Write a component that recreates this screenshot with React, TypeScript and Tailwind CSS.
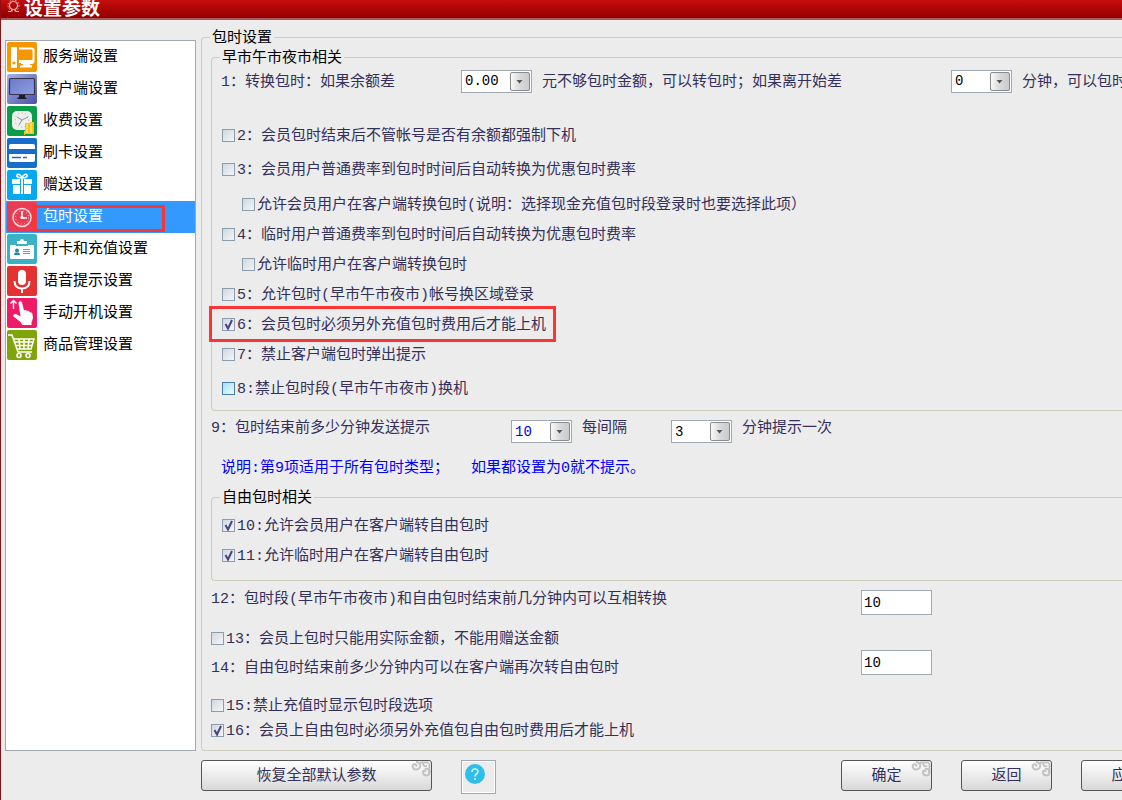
import { useState } from "react";
import type { ReactNode } from "react";

const ICONS: Record<string, ReactNode> = {
  server: (
    <>
      <rect width="30" height="30" rx="2" fill="#f39800" />
      <rect x="4" y="5" width="6" height="21" rx=".5" fill="#fff" />
      <circle cx="7" cy="21" r="1.600" fill="#f39800" />
      <path d="M12 6.500h12.500a2 2 0 0 1 2 2V19a2 2 0 0 1-2 2H14" fill="none" stroke="#fff" strokeWidth="2" />
      <path d="M16 21h7v2h2v2.500H13V24l3-1zM12 18h14v3H12z" fill="#fff" />
    </>
  ),
  client: (
    <>
      <defs>
        <linearGradient id="clientBg" x1="0" y1="0" x2="1" y2="1">
          <stop offset="0" stopColor="#a9b3e4" />
          <stop offset="1" stopColor="#4a50a8" />
        </linearGradient>
        <linearGradient id="clientScreen" x1="0" y1="0" x2="1" y2="1">
          <stop offset="0" stopColor="#6a7ac8" />
          <stop offset="1" stopColor="#8f9fe0" />
        </linearGradient>
      </defs>
      <rect width="30" height="30" rx="2" fill="url(#clientBg)" />
      <rect x="2.500" y="4.500" width="25" height="16" rx="1" fill="url(#clientScreen)" stroke="#33344a" strokeWidth="1.200" />
      <path d="M12 21h6v2.500h1.500V25h-9v-1.500H12z" fill="#1b1b26" />
    </>
  ),
  fee: (
    <>
      <rect width="30" height="30" rx="2" fill="#0a9c48" />
      <rect x="5" y="5" width="20" height="19" rx="5" fill="#eef0ee" />
      <circle cx="15" cy="14" r="7" fill="none" stroke="#aaa" strokeDasharray="1 2.600" />
      <path d="M10 11l5 3 6-3M15 14l-3 5" fill="none" stroke="#777" strokeWidth=".8" />
      <path d="M18 17h5v-1h4v12h-9v1h-1v-4h1z" fill="#f6c51c" />
      <path d="M20 18v9M24 17v10" stroke="#fbe27a" strokeWidth="1.500" />
    </>
  ),
  card: (
    <>
      <rect width="30" height="30" rx="2" fill="#186dcb" />
      <path d="M4 6h22a2 2 0 0 1 2 2v3H2V8a2 2 0 0 1 2-2zM2 16h26v6a2 2 0 0 1-2 2H4a2 2 0 0 1-2-2z" fill="#fff" />
      <path d="M5 19.500h9M16 19.500h4" stroke="#186dcb" strokeWidth="1.500" />
    </>
  ),
  gift: (
    <>
      <rect width="30" height="30" rx="2" fill="#06a9ef" />
      <path d="M5 9h8v5H5zM17 9h8v5h-8zM6 15h7v9H6zM17 15h7v9h-7zM14 9h2v15h-2z" fill="#fff" />
      <path d="M15 8c-1-3-4-5-5-3s2 3 5 3c3 0 6-1 5-3s-4 0-5 3z" fill="none" stroke="#fff" strokeWidth="1.500" />
    </>
  ),
  clock: (
    <>
      <rect width="30" height="30" rx="2" fill="#e73c53" />
      <circle cx="15" cy="15.500" r="9" fill="none" stroke="#fbd5da" strokeWidth="1.500" />
      <circle cx="15" cy="15.500" r="6.500" fill="none" stroke="#fbd5da" strokeDasharray="1 2.400" />
      <path d="M15 9v7h5" fill="none" stroke="#fff" strokeWidth="1.600" />
      <circle cx="15" cy="15.500" r="1.600" fill="#fff" />
    </>
  ),
  badge: (
    <>
      <rect width="30" height="30" rx="2" fill="#3bb1c5" />
      <path d="M4 11h22a1 1 0 0 1 1 1v12a1 1 0 0 1-1 1H4a1 1 0 0 1-1-1V12a1 1 0 0 1 1-1z" fill="#fff" />
      <path d="M10 10V7h3a2 2 0 0 1 4 0h3v3z" fill="#fff" />
      <path d="M9 11h12v1H9zM16 15h7v1h-7zM16 17h7v1h-7zM16 19h7v1h-7z" fill="#3bb1c5" />
      <path d="M7 21c0-2 1-2.500 3-2.500s3 .5 3 2.500z" fill="#2a8a9c" />
      <circle cx="10" cy="16.500" r="2" fill="#2a8a9c" />
    </>
  ),
  mic: (
    <>
      <rect width="30" height="30" rx="2" fill="#e23232" />
      <rect x="11" y="4" width="8" height="15" rx="4" fill="#fff" />
      <path d="M7.500 15c0 5 3 7.500 7.500 7.500s7.500-2.500 7.500-7.500M15 23v4" fill="none" stroke="#fff" strokeWidth="2" />
    </>
  ),
  hand: (
    <>
      <rect width="30" height="30" rx="2" fill="#ef1b66" />
      <path
        d="M11.500 5a1.800 1.800 0 0 1 3.500-.5l2 8c1-.8 2.500-.5 3 .6 1-.6 2.500 0 2.800 1.200 1.500-.3 2.500.5 2.700 2l.5 3.700-1.500 4.500V27h-9l-2-3-7-5.500c-1-1.500.8-3 2.500-2.500l4.500 2.500z"
        fill="#fff"
      />
      <path d="M6.500 11V3M3.500 5.500l3-3 3 3" fill="none" stroke="#fff" strokeWidth="1.400" />
    </>
  ),
  cart: (
    <>
      <rect width="30" height="30" rx="2" fill="#80a40c" />
      <path
        d="M1 5h4l6 17h14M6 9h21l-3 10H10M7.500 12h19M9 15.500h16M12 9l1 10M17 9v10M22 9l-1 10"
        fill="none"
        stroke="#fff"
        strokeWidth="1.500"
      />
      <circle cx="12" cy="25.500" r="2" fill="none" stroke="#fff" strokeWidth="1.600" />
      <circle cx="21" cy="25.500" r="2" fill="none" stroke="#fff" strokeWidth="1.600" />
    </>
  ),
};

const MENU = [
  { icon: "server", label: "服务端设置" },
  { icon: "client", label: "客户端设置" },
  { icon: "fee", label: "收费设置" },
  { icon: "card", label: "刷卡设置" },
  { icon: "gift", label: "赠送设置" },
  { icon: "clock", label: "包时设置" },
  { icon: "badge", label: "开卡和充值设置" },
  { icon: "mic", label: "语音提示设置" },
  { icon: "hand", label: "手动开机设置" },
  { icon: "cart", label: "商品管理设置" },
];

interface CheckProps {
  label: string;
  checked?: boolean;
  hot?: boolean;
  className?: string;
  children?: ReactNode;
}

function Check({ label, checked = false, hot = false, className = "h-[30px]", children }: CheckProps) {
  return (
    <label className={`relative flex w-fit items-center gap-[2px] ${className}`}>
      <span className="grid">
        <input
          type="checkbox"
          defaultChecked={checked}
          className={`peer col-start-1 row-start-1 size-[13px] appearance-none border bg-linear-to-br ${
            hot
              ? "border-[#4a7fa3] from-[#9fe0f8] to-[#effaff]"
              : "border-[#8e9dab] from-[#cfd8e0] to-[#f4f6f8]"
          }`}
        />
        <svg
          viewBox="0 0 13 13"
          className="pointer-events-none invisible col-start-1 row-start-1 size-[13px] peer-checked:visible"
        >
          <path d="M3.500 6l2.500 4.500L10 2" fill="none" stroke="#474583" strokeWidth="2" />
        </svg>
      </span>
      <span className="pt-1">{label}</span>
      {children}
    </label>
  );
}

interface ComboProps {
  name: string;
  value: string;
  options: string[];
  className: string;
}

function Combo({ name, value, options, className }: ComboProps) {
  return (
    <span className={`relative h-[23px] shrink-0 ${className}`}>
      <select
        aria-label={name}
        defaultValue={value}
        className="block h-full w-full appearance-none border border-[#a0a9b2] bg-white pl-[3px] text-sm"
      >
        {options.map((o) => (
          <option key={o}>{o}</option>
        ))}
      </select>
      <svg viewBox="0 0 20 19" className="pointer-events-none absolute top-[2px] right-[2px] h-[19px] w-5">
        <defs>
          <linearGradient id="comboBtn" x1="0" y1="0" x2="1" y2="0">
            <stop offset="0" stopColor="#fafafa" />
            <stop offset=".5" stopColor="#d9d9db" />
            <stop offset="1" stopColor="#c9c9cf" />
          </linearGradient>
        </defs>
        <rect x=".5" y=".5" width="19" height="18" rx="1.500" fill="url(#comboBtn)" stroke="#8b8b8b" />
        <path d="M6.500 8h6l-3 3.500z" fill="#555" />
      </svg>
    </span>
  );
}

function Group({ title, className = "", children }: { title: string; className?: string; children: ReactNode }) {
  return (
    <fieldset className={`min-w-0 rounded-l border border-r-0 border-[#cdcdbd] ${className}`}>
      <legend className="ml-2 px-[2px] pt-1 leading-4 text-black">{title}</legend>
      {children}
    </fieldset>
  );
}

function PushButton({ className, children }: { className: string; children: ReactNode }) {
  return (
    <button
      type="button"
      className={`relative h-[31px] shrink-0 rounded-[3px] border border-[#555] bg-linear-to-b from-white via-[#ececec] to-[#d8d8d8] pt-[2px] ${className}`}
    >
      {children}
      <svg viewBox="0 0 20 16" className="absolute top-0 right-0 h-4 w-5" fill="none" stroke="#c2c2c2" strokeWidth="2">
        <path d="M5 5.500c1-1.500-1-3-2.500-2s-1 4.500 2 5S10 6 9 3.500 6 1 5 1" />
        <path d="M9 1.500h9M12 2c0 3 2 4 4 2.500M18.500 2v10" />
        <path d="M14.500 11c0-2-2.500-2-2.500 0s1.500 3.500 4 3.500 3-3 2-5-3-2-4-1.500" />
      </svg>
    </button>
  );
}

export default function App() {
  const [active, setActive] = useState("包时设置");

  return (
    <div className="flex min-h-screen flex-col overflow-hidden border-l border-[#8a1016] bg-[#ececec] font-['Liberation_Mono','Noto_Sans_CJK_SC',monospace] text-[15px] leading-5 whitespace-nowrap text-[#33305a]">
      <header className="flex h-5 shrink-0 items-start gap-1 border-b-2 border-[#a8585a] bg-linear-to-b from-[#c80d0d] to-[#920000] pl-[6px]">
        <svg viewBox="0 0 13 13" className="size-[13px]" fill="none" stroke="#e8b9b4" strokeWidth="1.200">
          <circle cx="6.500" cy="5.500" r="4" />
          <circle cx="6.500" cy="5.500" r="5.500" strokeDasharray="1.500 1.500" strokeWidth="1" />
          <path d="M1 11.500h3l1-2M12 11.500H9l-1-2" />
        </svg>
        <h1 className="text-[19px] leading-5 font-bold text-white">设置参数</h1>
      </header>

      <div className="flex pt-[7px] pl-1">
        <nav className="mt-[13px] w-[191px] shrink-0 border border-[#a0a9b2] bg-white">
          {MENU.map((m) => (
            <button
              key={m.label}
              type="button"
              onClick={() => setActive(m.label)}
              className={`relative flex h-8 w-full items-center gap-[6px] pl-px ${
                active === m.label ? "bg-[#3399ff] text-white" : "text-black"
              }`}
            >
              <svg viewBox="0 0 30 30" className="size-[30px]">
                {ICONS[m.icon]}
              </svg>
              <span className="pt-[2px]">{m.label}</span>
              {m.icon === "clock" && (
                <span className="absolute top-1 right-[30px] bottom-px left-[26px] border-3 border-[#f93636]" />
              )}
            </button>
          ))}
        </nav>

        <main className="ml-[5px] min-w-0 flex-1">
          <Group title="包时设置" className="pb-[10px]">
            <div className="pl-[9px]">
              <Group title="早市午市夜市相关" className="pb-[7px]">
                <div className="flex h-7 items-center pl-[9px]">
                  <span className="w-60 shrink-0 pt-1">1：转换包时：如果余额差</span>
                  <Combo name="余额差" value="0.00" options={["0.00", "1.00", "5.00"]} className="w-[71px] text-black" />
                  <span className="w-[419px] shrink-0 pt-1 pl-[10px]">元不够包时金额，可以转包时；如果离开始差</span>
                  <Combo name="离开始差" value="0" options={["0", "5", "10"]} className="w-[61px] text-black" />
                  <span className="pt-1 pl-[10px]">分钟，可以包时</span>
                </div>
                <div className="pt-[25px] pl-[10px]">
                  <Check label="2：会员包时结束后不管帐号是否有余额都强制下机" />
                  <Check className="mt-1 h-[30px]" label="3：会员用户普通费率到包时时间后自动转换为优惠包时费率" />
                  <Check
                    className="mt-[5px] ml-5 h-[30px]"
                    label="允许会员用户在客户端转换包时(说明：选择现金充值包时段登录时也要选择此项）"
                  />
                  <Check label="4：临时用户普通费率到包时时间后自动转换为优惠包时费率" />
                  <Check className="ml-5 h-[30px]" label="允许临时用户在客户端转换包时" />
                  <Check label="5：允许包时(早市午市夜市)帐号换区域登录" />
                  <Check label="6：会员包时必须另外充值包时费用后才能上机" checked>
                    <span className="absolute -inset-y-[3px] -right-[10px] -left-[13px] border-3 border-[#f93636]" />
                  </Check>
                  <Check label="7：禁止客户端包时弹出提示" />
                  <Check className="mt-1 h-[30px]" label="8:禁止包时段(早市午市夜市)换机" hot />
                </div>
              </Group>

              <div className="mt-[6px] flex h-[26px] items-start">
                <span className="w-[300px] shrink-0 pt-[2px]">9：包时结束前多少分钟发送提示</span>
                <Combo
                  name="包时结束前多少分钟"
                  value="10"
                  options={["0", "5", "10", "15"]}
                  className="w-[61px] self-end text-[#0000ff]"
                />
                <span className="w-[99px] shrink-0 pt-[2px] pl-[10px]">每间隔</span>
                <Combo name="每间隔" value="3" options={["1", "3", "5"]} className="w-[61px] self-end text-black" />
                <span className="pt-[2px] pl-[10px]">分钟提示一次</span>
              </div>
              <p className="mt-4 flex pl-[10px] text-[#0000ff]">
                <span className="w-[250px] shrink-0">说明:第9项适用于所有包时类型；</span>
                <span>如果都设置为0就不提示。</span>
              </p>

              <Group title="自由包时相关" className="mt-2 pb-[10px]">
                <div className="pt-[3px] pl-[10px]">
                  <Check label="10:允许会员用户在客户端转自由包时" checked />
                  <Check label="11:允许临时用户在客户端转自由包时" checked />
                </div>
              </Group>

              <div className="mt-[7px] flex h-[27px] items-start">
                <label htmlFor="switchMinutes" className="w-[650px] shrink-0 pt-[2px]">
                  12：包时段(早市午市夜市)和自由包时结束前几分钟内可以互相转换
                </label>
                <input
                  id="switchMinutes"
                  defaultValue="10"
                  className="h-[25px] w-[71px] self-end border border-[#a0a9b2] bg-white px-[2px] text-sm text-black"
                />
              </div>
              <Check className="mt-[13px] h-5" label="13：会员上包时只能用实际金额，不能用赠送金额" />
              <div className="mt-[2px] flex h-[27px] items-start">
                <label htmlFor="againMinutes" className="w-[650px] shrink-0 pt-[9px]">
                  14：自由包时结束前多少分钟内可以在客户端再次转自由包时
                </label>
                <input
                  id="againMinutes"
                  defaultValue="10"
                  className="h-[25px] w-[71px] border border-[#a0a9b2] bg-white px-[2px] text-sm text-black"
                />
              </div>
              <Check className="mt-[18px] h-5" label="15:禁止充值时显示包时段选项" />
              <Check className="mt-[5px] h-5" label="16：会员上自由包时必须另外充值包自由包时费用后才能上机" checked />
            </div>
          </Group>
        </main>
      </div>

      <footer className="-mr-[50px] flex items-start gap-[29px] pt-[9px] pl-[200px]">
        <PushButton className="w-[231px]">恢复全部默认参数</PushButton>
        <button
          type="button"
          aria-label="帮助"
          className="flex h-[34px] w-[35px] shrink-0 items-start border border-[#a0a9b2] p-[3px] shadow-[inset_0_0_0_1px_white]"
        >
          <svg viewBox="0 0 20 20" className="size-5">
            <circle cx="10" cy="10" r="10" fill="#2fbdec" />
            <path d="M7 8c0-4 6-4 6-.5 0 2.500-3 2-3 5M10 14v2" fill="none" stroke="#d9f4fd" strokeWidth="1.600" />
          </svg>
        </button>
        <div className="ml-auto flex gap-[29px]">
          <PushButton className="w-[91px]">确定</PushButton>
          <PushButton className="w-[91px]">返回</PushButton>
          <PushButton className="w-[91px]">应用</PushButton>
        </div>
      </footer>
    </div>
  );
}
